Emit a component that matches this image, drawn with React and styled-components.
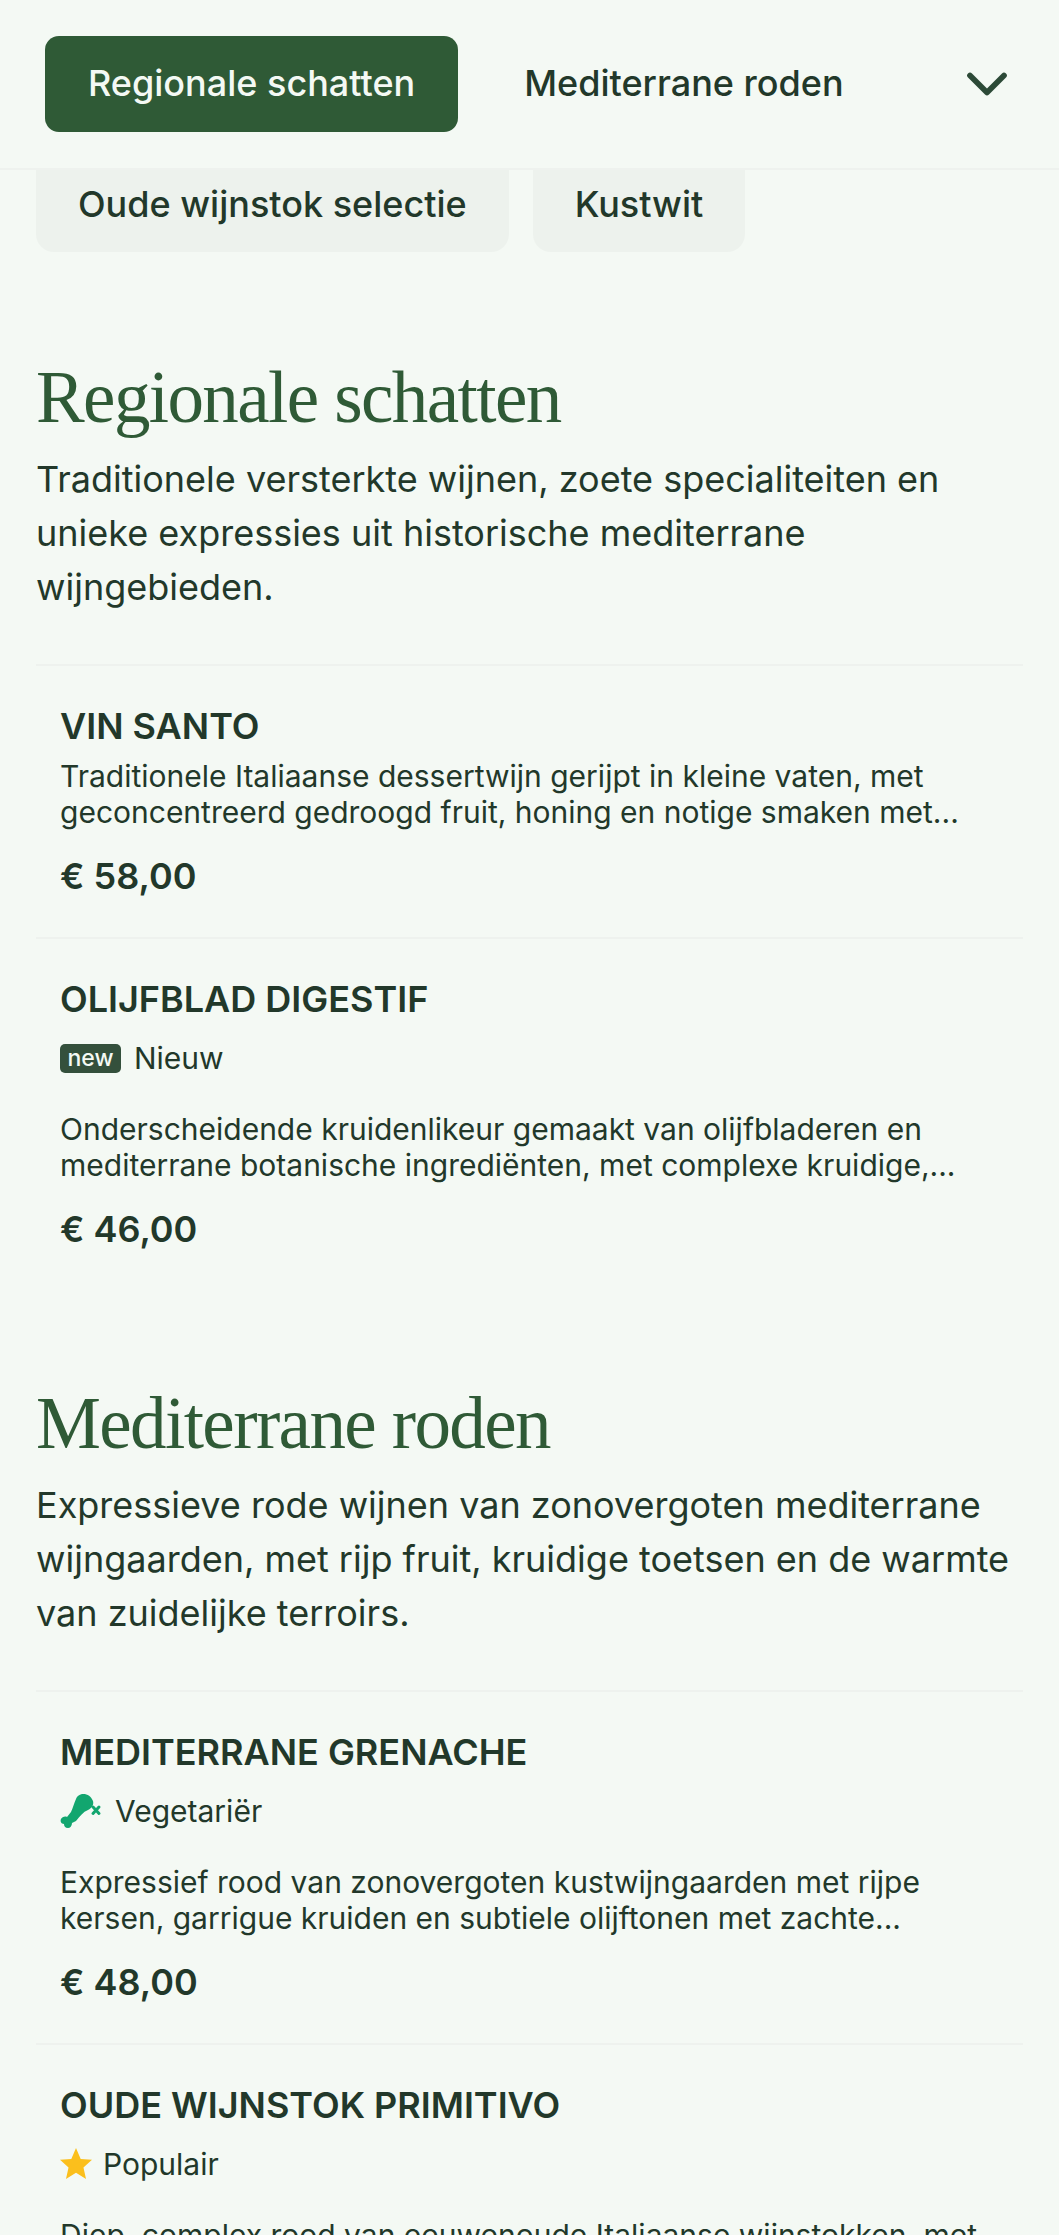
import React from "react";
import styled, { createGlobalStyle } from "styled-components";
import { ChevronDown } from "lucide-react";

const GREEN = "#2f5a36";
const DARK = "#22382a";
const PAPER = "#f4f9f4";

const GlobalStyle = createGlobalStyle`
  html, body {
    margin: 0;
    padding: 0;
    background: ${PAPER};
  }
  body {
    height: 2235px;
    overflow: hidden;
    font-family: "Inter", sans-serif;
    color: ${DARK};
  }
  * { box-sizing: border-box; }
`;

const Page = styled.div`
  position: relative;
  width: 1059px;
  height: 2235px;
  overflow: hidden;
`;

const TopBar = styled.header`
  position: absolute;
  top: 0;
  left: 0;
  right: 0;
  z-index: 2;
  height: 170px;
  display: flex;
  align-items: center;
  padding: 0 45px;
  background: ${PAPER};
  border-bottom: 2px solid #eef2ee;
`;

const Tab = styled.div`
  height: 96px;
  display: flex;
  align-items: center;
  padding: 0 43px 2px;
  border-radius: 14px;
  font-size: 36px;
  font-weight: 450;
  background: ${(p) => (p.$active ? GREEN : "transparent")};
  color: ${(p) => (p.$active ? PAPER : DARK)};
  margin-right: ${(p) => (p.$active ? "23px" : "0")};
`;

const ChevronButton = styled.div`
  margin-left: auto;
  margin-right: -7px;
  display: flex;
  color: #2c4a37;
`;

const Content = styled.main`
  padding: 0 36px;
`;

const SubTabs = styled.div`
  display: flex;
  gap: 24px;
  height: 252px;
`;

const SubTab = styled.div`
  margin-top: 130px;
  height: 122px;
  display: flex;
  align-items: flex-end;
  padding: 0 42px 26px;
  border-radius: 0 0 18px 18px;
  background: #edf2ed;
  font-size: 36px;
  font-weight: 500;
  line-height: 44px;
`;

const Section = styled.section`
  margin-top: ${(p) => p.$top}px;
`;

const SectionTitle = styled.h2`
  margin: 0;
  font-family: "Liberation Serif", serif;
  font-weight: 400;
  font-size: 73px;
  line-height: 80px;
  letter-spacing: -1.6px;
  color: ${GREEN};
`;

const SectionText = styled.p`
  margin: 14px 0 0;
  font-size: 36px;
  line-height: 54px;
`;

const Item = styled.article`
  margin-top: ${(p) => p.$top || 0}px;
  padding: 38px 24px 38px;
  border-top: 2px solid #eef2ee;
`;

const ItemName = styled.h3`
  margin: 0;
  font-size: 36px;
  font-weight: 600;
  line-height: 44px;
`;

const Tag = styled.div`
  display: flex;
  align-items: center;
  height: 44px;
  margin: 15px 0 31px;
  gap: 13px;
  font-size: 30px;
`;

const NewBadge = styled.span`
  width: 61px;
  height: 29px;
  display: flex;
  align-items: center;
  justify-content: center;
  border-radius: 5px;
  background: #34503c;
  color: ${PAPER};
  font-size: 23px;
  font-weight: 500;
  line-height: 1;
`;

const ItemText = styled.p`
  margin: 10px 0 0;
  font-size: 30px;
  line-height: 36px;
`;

const Price = styled.div`
  margin-top: 23px;
  font-size: 36px;
  font-weight: 600;
  line-height: 46px;
`;

const VegetarianIcon = () => (
  <svg width="42" height="38" viewBox="5 7 42 38" aria-hidden="true">
    <path
      fill="#12a66f"
      d="M27 9c5-.5 9 2 11 7 1 4-1 7-5 9-5 2-8 6-12 11l-4 2c0 3-2 5-4 5-3 0-4-2-4-4-3 0-4-3-3-5 1-2 4-3 6-2l4-5c2-4 3-9 5-13 1-3 3-4 6-5z"
    />
    <path stroke="#12a66f" strokeWidth="3" strokeLinecap="round" d="M38 22l6 6.5M44 22l-6 6.5" />
  </svg>
);

const Star = styled.svg`
  margin-right: -2px;
`;

const StarIcon = () => (
  <Star width="32" height="32" viewBox="0 0 30 30" aria-hidden="true">
    <path fill="#fbbf1c" d="M15 0l4.4 10.2 10.6.9-8 7.2 2.4 10.7-9.4-5.7-9.4 5.7 2.4-10.7-8-7.2 10.6-.9z" />
  </Star>
);

const App = () => (
  <Page>
    <GlobalStyle />
    <TopBar>
      <Tab $active>Regionale schatten</Tab>
      <Tab>Mediterrane roden</Tab>
      <ChevronButton>
        <ChevronDown size={68} strokeWidth={2} />
      </ChevronButton>
    </TopBar>
    <Content>
      <SubTabs>
        <SubTab>Oude wijnstok selectie</SubTab>
        <SubTab>Kustwit</SubTab>
      </SubTabs>

      <Section $top={106}>
        <SectionTitle>Regionale schatten</SectionTitle>
        <SectionText>
          Traditionele versterkte wijnen, zoete specialiteiten en
          <br />
          unieke expressies uit historische mediterrane
          <br />
          wijngebieden.
        </SectionText>
        <Item $top={50}>
          <ItemName>VIN SANTO</ItemName>
          <ItemText>
            Traditionele Italiaanse dessertwijn gerijpt in kleine vaten, met
            <br />
            geconcentreerd gedroogd fruit, honing en notige smaken met...
          </ItemText>
          <Price>€ 58,00</Price>
        </Item>
        <Item>
          <ItemName>OLIJFBLAD DIGESTIF</ItemName>
          <Tag>
            <NewBadge>new</NewBadge>
            Nieuw
          </Tag>
          <ItemText>
            Onderscheidende kruidenlikeur gemaakt van olijfbladeren en
            <br />
            mediterrane botanische ingrediënten, met complexe kruidige,...
          </ItemText>
          <Price>€ 46,00</Price>
        </Item>
      </Section>

      <Section $top={94}>
        <SectionTitle>Mediterrane roden</SectionTitle>
        <SectionText>
          Expressieve rode wijnen van zonovergoten mediterrane
          <br />
          wijngaarden, met rijp fruit, kruidige toetsen en de warmte
          <br />
          van zuidelijke terroirs.
        </SectionText>
        <Item $top={50}>
          <ItemName>MEDITERRANE GRENACHE</ItemName>
          <Tag>
            <VegetarianIcon />
            Vegetariër
          </Tag>
          <ItemText>
            Expressief rood van zonovergoten kustwijngaarden met rijpe
            <br />
            kersen, garrigue kruiden en subtiele olijftonen met zachte...
          </ItemText>
          <Price>€ 48,00</Price>
        </Item>
        <Item>
          <ItemName>OUDE WIJNSTOK PRIMITIVO</ItemName>
          <Tag>
            <StarIcon />
            Populair
          </Tag>
          <ItemText>Diep, complex rood van eeuwenoude Italiaanse wijnstokken, met</ItemText>
        </Item>
      </Section>
    </Content>
  </Page>
);

export default App;
